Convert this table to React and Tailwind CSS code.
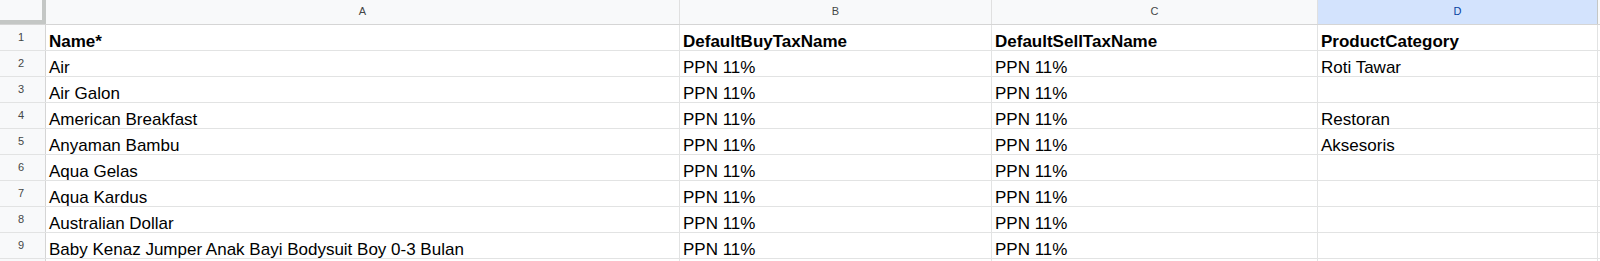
const columns = [
  { label: "A", width: "w-[634px]" },
  { label: "B", width: "w-[312px]" },
  { label: "C", width: "w-[326px]" },
  { label: "D", width: "w-[280px]", selected: true },
];

const rows = [
  ["Name*", "DefaultBuyTaxName", "DefaultSellTaxName", "ProductCategory"],
  ["Air", "PPN 11%", "PPN 11%", "Roti Tawar"],
  ["Air Galon", "PPN 11%", "PPN 11%", ""],
  ["American Breakfast", "PPN 11%", "PPN 11%", "Restoran"],
  ["Anyaman Bambu", "PPN 11%", "PPN 11%", "Aksesoris"],
  ["Aqua Gelas", "PPN 11%", "PPN 11%", ""],
  ["Aqua Kardus", "PPN 11%", "PPN 11%", ""],
  ["Australian Dollar", "PPN 11%", "PPN 11%", ""],
  ["Baby Kenaz Jumper Anak Bayi Bodysuit Boy 0-3 Bulan", "PPN 11%", "PPN 11%", ""],
];

const App = () => {
  return (
    <main className="h-[261px] w-[1600px] overflow-hidden bg-white font-['Liberation_Sans',Arial,sans-serif]">
      <div className="flex h-[25px] border-b border-[#d5d5d5] bg-[#f8f9fa]">
        <div className="w-[46px] shrink-0 border-r-4 border-b-4 border-[#c4c7c5] bg-[#f8f9fa]" />
        {columns.map((col) => (
          <div
            key={col.label}
            className={
              col.selected
                ? "flex w-[280px] shrink-0 items-center justify-center border-r border-[#c4c7c5] bg-[#d3e3fd] pb-[1px] text-[11px] text-[#0842a0]"
                : `flex ${col.width} shrink-0 items-center justify-center border-r border-[#e0e0e0] pb-[1px] text-[11px] text-[#444746]`
            }
          >
            {col.label}
          </div>
        ))}
        <div className="flex-1" />
      </div>

      {rows.map((row, i) => (
        <div key={i} className="flex h-[26px] border-b border-[#e2e3e3]">
          <div className="flex w-[46px] shrink-0 items-center justify-center border-r border-[#d5d5d5] bg-[#f8f9fa] pr-[3px] text-[11px] text-[#444746]">
            {i + 1}
          </div>
          {row.map((cell, j) => (
            <div
              key={j}
              className={`flex ${columns[j].width} shrink-0 items-end overflow-hidden whitespace-nowrap border-r border-[#e2e3e3] pl-[3px] text-[17px] leading-[16px] text-black ${
                i === 0 ? "font-bold" : ""
              }`}
            >
              {cell}
            </div>
          ))}
          <div className="flex-1" />
        </div>
      ))}

      <div className="flex h-[26px]">
        <div className="w-[46px] shrink-0 border-r border-[#d5d5d5] bg-[#f8f9fa]" />
        {columns.map((col) => (
          <div key={col.label} className={`${col.width} shrink-0 border-r border-[#e2e3e3]`} />
        ))}
      </div>
    </main>
  );
};

export default App;
